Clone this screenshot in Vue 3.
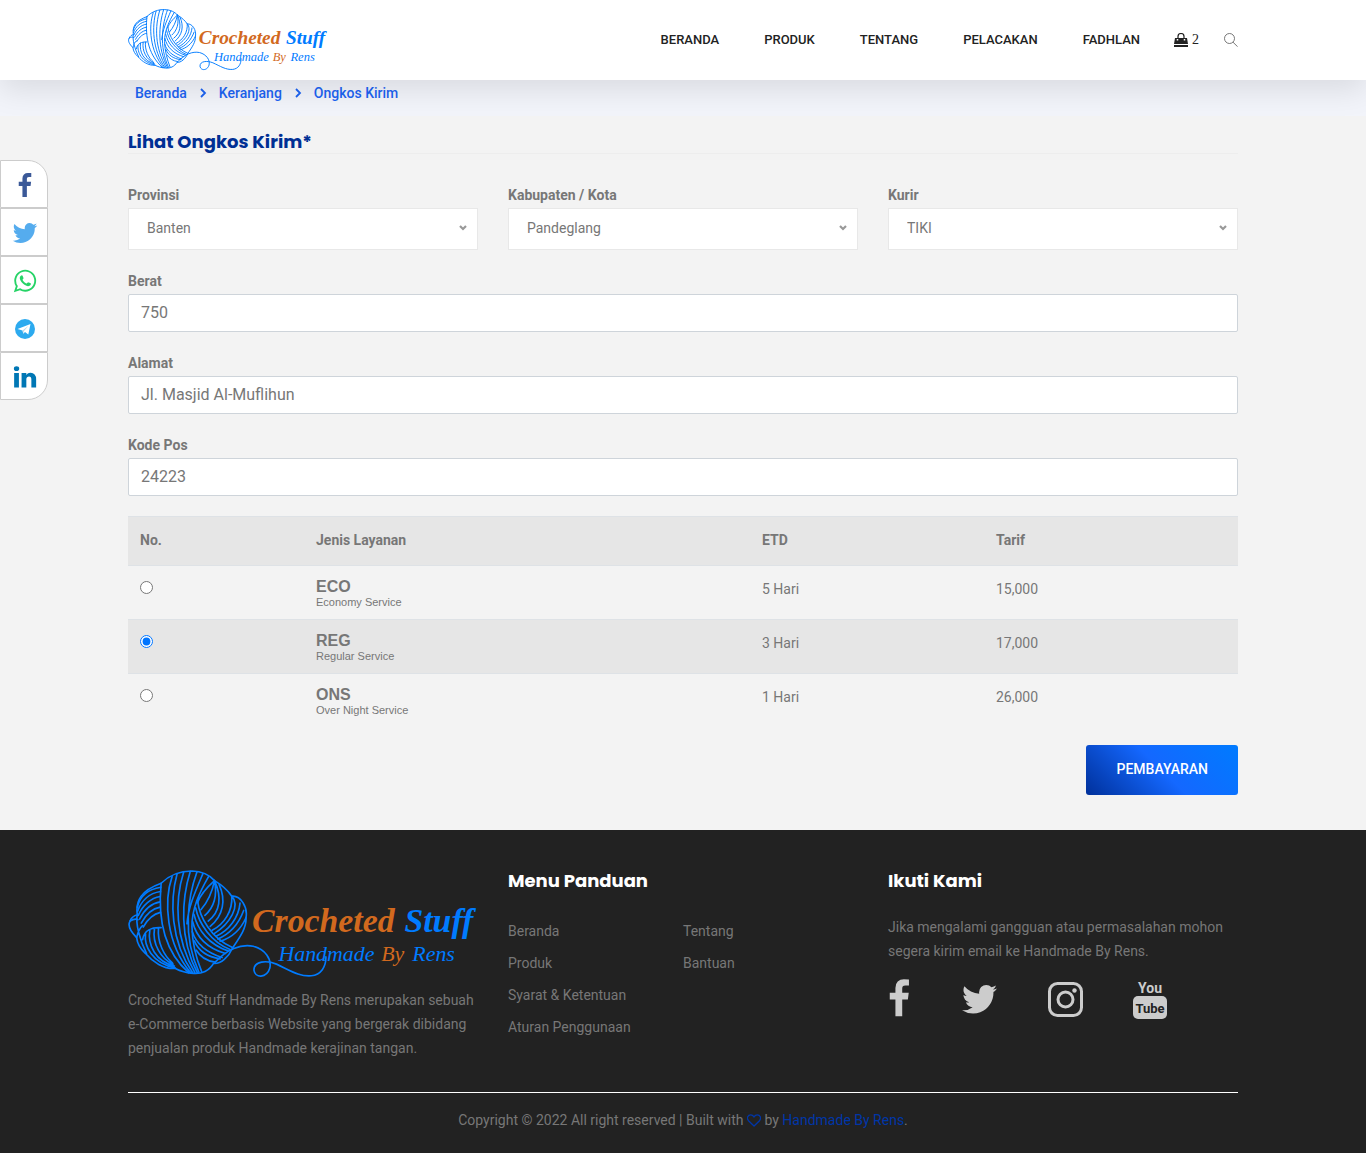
<script setup>
import { h, ref } from 'vue'

const strands = [
  'M122 68C150 40 180 31 215 31C248 32 270 45 283 60C308 75 325 92 335 107C362 104 384 140 378 172C380 202 360 230 337 264C326 290 302 312 280 310C268 332 244 342 220 340C196 338 178 332 165 325C130 328 96 305 75 280C58 265 50 250 48 232C28 212 20 196 28 182C33 170 42 165 50 163C44 120 62 90 122 68Z',
  'M121 80C82 86 58 108 50 140M120 93C86 98 62 122 51 152M119 108C92 112 66 134 53 165M119 124C94 128 72 146 57 176M119 140C96 144 76 162 62 188M120 156C102 160 84 172 68 200',
  'M122 68C114 150 118 262 205 338M155 48C130 120 136 250 211 338M170 40C148 120 150 242 217 338M190 34C163 120 163 232 224 338M210 32C184 115 176 232 231 338M230 34C204 105 184 225 236 336M248 39C224 95 204 140 200 190M265 48C238 95 214 145 215 200C216 250 230 300 244 334M283 60C256 84 240 104 232 126',
  'M232 122C238 170 272 234 337 262M226 142C236 190 272 244 330 268M221 162C232 210 268 254 324 272M217 184C228 230 262 264 316 280M216 214C228 252 258 276 306 292M222 242C234 270 258 290 300 296M228 270C240 290 258 302 285 306',
  'M283 60C292 105 282 140 254 165M283 60C306 110 300 155 264 182M297 72C318 118 310 165 270 198M335 107C338 150 314 190 276 210M335 107C362 135 330 190 282 220M360 128C356 172 326 210 288 228M371 150C354 196 326 222 293 236M378 172C360 212 330 234 300 243M283 60C276 95 262 125 242 148',
  'M66 238C70 210 94 200 122 202M50 163C44 190 58 240 78 280M75 220C70 255 92 308 165 324M88 208C80 255 106 304 162 318M102 204C94 250 122 298 158 312M114 203C110 246 130 286 156 308M48 232C52 215 56 204 66 196M28 182C38 176 46 174 52 178',
  'M285 306C320 268 362 250 400 258C436 268 456 296 450 324C440 356 405 354 402 330C402 302 440 300 470 312C510 330 538 350 575 347C604 344 620 320 619 290'
]

const brandText = (x, y, size, fill, weight, text) =>
  h('text', {
    x,
    y,
    fill,
    'font-size': size,
    'font-weight': weight,
    'font-style': 'italic',
    'font-family': '"Liberation Serif", serif'
  }, text)

const BrandLogo = () =>
  h('svg', { viewBox: '22 28 1056 326', role: 'img', 'aria-label': 'Crocheted Stuff' }, [
    h('g', { fill: 'none', stroke: '#007bff', 'stroke-width': 5, 'stroke-linecap': 'round' },
      strands.map((d) => h('path', { d }))),
    brandText(396, 214, 102, '#d2691e', 700, 'Crocheted'),
    brandText(856, 214, 102, '#007bff', 700, 'Stuff'),
    brandText(476, 304, 66, '#007bff', 400, 'Handmade'),
    brandText(786, 304, 66, '#d2691e', 400, 'By'),
    brandText(880, 304, 66, '#007bff', 400, 'Rens')
  ])

const icons = {
  facebook: 'M1343 12v264h-157q-86 0-116 36t-30 108v189h293l-39 296h-254v759h-306v-759h-255v-296h255v-218q0-186 104-288.500t277-102.500q147 0 228 12z',
  twitter: 'M1684 408q-67 98-162 167 1 14 1 42 0 130-38 259.500t-115.500 248.500-184.500 210.500-258 146-323 54.500q-271 0-496-145 35 4 78 4 225 0 401-138-105-2-188-64.500t-114-159.500q33 5 61 5 43 0 85-11-112-23-185.500-111.500t-73.500-205.500v-4q68 38 146 41-66-44-105-115t-39-154q0-88 44-163 121 149 294.500 238.500t371.500 99.500q-8-38-8-74 0-134 94.500-228.500t228.500-94.500q140 0 236 102 109-21 205-78-37 115-142 178 93-10 186-50z',
  whatsapp: 'M1113 974q13 0 97.500 44t89.500 53q2 5 2 15 0 33-17 76-16 39-71 65.500t-102 26.500q-57 0-190-62-98-45-170-118t-148-185q-72-107-71-194v-8q3-91 74-158 24-22 52-22 6 0 18 1.500t19 1.500q19 0 26.500 6.500t15.500 27.500q8 20 33 88t25 75q0 21-34.500 57.500t-34.500 46.500q0 7 5 15 34 73 102 137 56 53 151 101 12 7 22 7 15 0 54-48.500t52-48.500zm-203 530q127 0 243.500-50t200.500-134 134-200.500 50-243.500-50-243.500-134-200.500-200.500-134-243.500-50-243.500 50-200.500 134-134 200.500-50 243.500q0 203 120 368l-79 233 242-77q158 104 345 104zm0-1382q153 0 292.500 60t240.500 161 161 240.500 60 292.500-60 292.500-161 240.500-240.500 161-292.500 60q-195 0-365-94l-417 134 136-405q-108-178-108-389 0-153 60-292.500t161-240.500 240.500-161 292.500-60z',
  linkedin: 'M477 625v991h-330v-991h330zm21-306q1 73-50.500 122t-135.500 49h-2q-82 0-132-49t-50-122q0-74 51.500-122.500t134.500-48.500 133 48.500 51 122.500zm1166 729v568h-329v-530q0-105-40.500-164.500t-126.500-59.500q-63 0-105.500 34.500t-63.500 85.500q-11 30-11 81v553h-329q2-399 2-647t-1-296l-1-48h329v144h-2q20-32 41-56t56.500-52 87-43.500 114.500-15.500q171 0 275 113.500t104 332.500z'
}

const shares = [
  { name: 'Facebook', path: icons.facebook, color: '#3b5998', box: '15 -64 1792 1792' },
  { name: 'Twitter', path: icons.twitter, color: '#55acee', box: '60 60 1672 1672' },
  { name: 'WhatsApp', path: icons.whatsapp, color: '#25d366', box: '0 0 1792 1792' },
  { name: 'Telegram', path: '', color: '#2caaef', box: '0 0 26 26' },
  { name: 'LinkedIn', path: icons.linkedin, color: '#0077b5', box: '0 0 1792 1792' }
]

const nav = ['Beranda', 'Produk', 'Tentang', 'Pelacakan', 'Fadhlan']
const crumbs = ['Beranda', 'Keranjang', 'Ongkos Kirim']

const selects = [
  { id: 'provinsi', label: 'Provinsi', value: 'Banten' },
  { id: 'kota', label: 'Kabupaten / Kota', value: 'Pandeglang' },
  { id: 'kurir', label: 'Kurir', value: 'TIKI' }
]

const fields = ref([
  { id: 'berat', label: 'Berat', value: '750' },
  { id: 'alamat', label: 'Alamat', value: 'Jl. Masjid Al-Muflihun' },
  { id: 'kodepos', label: 'Kode Pos', value: '24223' }
])

const services = [
  { code: 'ECO', name: 'Economy Service', etd: '5 Hari', price: '15,000' },
  { code: 'REG', name: 'Regular Service', etd: '3 Hari', price: '17,000' },
  { code: 'ONS', name: 'Over Night Service', etd: '1 Hari', price: '26,000' }
]
const chosen = ref('REG')

const guide = [
  ['Beranda', 'Produk', 'Syarat & Ketentuan', 'Aturan Penggunaan'],
  ['Tentang', 'Bantuan']
]
</script>

<template>
  <div class="page">
    <header class="header">
      <div class="container bar">
        <a href="#" class="brand"><BrandLogo class="logo" /></a>
        <nav class="nav">
          <a v-for="item in nav" :key="item" href="#">{{ item }}</a>
        </nav>
        <a href="#" class="cart" aria-label="Keranjang">
          <svg width="14" height="14" viewBox="0 0 14 14">
            <path d="M1 5h12l1 6H0zM0 12h14v2H0z" fill="#222" />
            <path d="M3.500 6v1.500M10.500 6v1.500" stroke="#fff" stroke-width="1.500" />
            <path d="M4 6V3.500a3 3 0 0 1 6 0V6" fill="none" stroke="#222" stroke-width="1.200" />
          </svg>
          <span>2</span>
        </a>
        <button type="button" class="search" aria-label="Cari">
          <svg width="14" height="14" viewBox="0 0 14 14" fill="none" stroke="#555" stroke-width=".8">
            <circle cx="5.500" cy="5.500" r="5" />
            <path d="M9 9.200l4.600 4.500" />
          </svg>
        </button>
      </div>
    </header>

    <div class="crumbs">
      <nav class="container trail" aria-label="Breadcrumb">
        <template v-for="(crumb, i) in crumbs" :key="crumb">
          <svg v-if="i" width="8" height="10" viewBox="0 0 8 10">
            <path d="M2 1l4 4-4 4" fill="none" stroke="#1c63f2" stroke-width="1.800" />
          </svg>
          <a href="#">{{ crumb }}</a>
        </template>
      </nav>
    </div>

    <main class="main">
      <div class="container">
        <h1 class="title">Lihat Ongkos Kirim*</h1>
        <form @submit.prevent>
          <div class="selects">
            <div v-for="s in selects" :key="s.id" class="field">
              <label :for="s.id">{{ s.label }}</label>
              <div class="select">
                <select :id="s.id">
                  <option>{{ s.value }}</option>
                </select>
                <svg width="8" height="6" viewBox="0 0 8 6">
                  <path d="M1 1l3 3 3-3" fill="none" stroke="#999" stroke-width="2.200" />
                </svg>
              </div>
            </div>
          </div>
          <div v-for="f in fields" :key="f.id" class="field">
            <label :for="f.id">{{ f.label }}</label>
            <input :id="f.id" v-model="f.value" type="text" class="input">
          </div>

          <table class="rates">
            <colgroup>
              <col class="c-no">
              <col>
              <col class="c-etd">
              <col class="c-price">
            </colgroup>
            <thead>
              <tr>
                <th>No.</th>
                <th>Jenis Layanan</th>
                <th>ETD</th>
                <th>Tarif</th>
              </tr>
            </thead>
            <tbody>
              <tr v-for="s in services" :key="s.code">
                <td>
                  <input :id="s.code" v-model="chosen" type="radio" name="layanan" :value="s.code">
                </td>
                <td>
                  <label :for="s.code" class="service">
                    <strong>{{ s.code }}</strong>
                    <small>{{ s.name }}</small>
                  </label>
                </td>
                <td>{{ s.etd }}</td>
                <td>{{ s.price }}</td>
              </tr>
            </tbody>
          </table>

          <div class="actions">
            <button type="submit" class="pay">PEMBAYARAN</button>
          </div>
        </form>
      </div>
    </main>

    <footer class="footer">
      <div class="container">
        <div class="columns">
          <section>
            <BrandLogo class="logo-large" />
            <p>Crocheted Stuff Handmade By Rens merupakan sebuah e-Commerce berbasis Website yang bergerak dibidang penjualan produk Handmade kerajinan tangan.</p>
          </section>
          <section>
            <h2>Menu Panduan</h2>
            <div class="guide">
              <ul v-for="(list, i) in guide" :key="i">
                <li v-for="item in list" :key="item"><a href="#">{{ item }}</a></li>
              </ul>
            </div>
          </section>
          <section>
            <h2>Ikuti Kami</h2>
            <p>Jika mengalami gangguan atau permasalahan mohon segera kirim email ke Handmade By Rens.</p>
            <div class="social">
              <a href="#" aria-label="Facebook">
                <svg width="23" height="40" viewBox="400 -15 1035 1800"><path :d="icons.facebook" /></svg>
              </a>
              <a href="#" aria-label="Twitter">
                <svg width="37" height="40" viewBox="63 -14 1665 1800"><path :d="icons.twitter" /></svg>
              </a>
              <a href="#" aria-label="Instagram">
                <svg width="35" height="40" viewBox="0 0 35 40">
                  <rect x="1.500" y="4.500" width="32" height="32" rx="8" class="line" />
                  <circle cx="17.500" cy="20.500" r="7.500" class="line" />
                  <circle cx="26.500" cy="11.500" r="2.200" />
                </svg>
              </a>
              <a href="#" aria-label="YouTube">
                <svg width="34" height="40" viewBox="0 0 34 40" class="youtube">
                  <text x="17" y="14" text-anchor="middle" font-size="14">You</text>
                  <rect y="17" width="34" height="23" rx="5" />
                  <text x="17" y="34" text-anchor="middle" font-size="13" class="dark">Tube</text>
                </svg>
              </a>
            </div>
          </section>
        </div>
        <p class="copyright">
          Copyright © 2022 All right reserved | Built with
          <svg width="14" height="13" viewBox="0 0 14 13">
            <path d="M7 12L1.500 6.700C-.8 4 1 .8 3.700.8 5.400.8 6.400 2 7 2.900 7.600 2 8.600.8 10.300.8 13 .8 14.800 4 12.500 6.700z" fill="none" stroke="#0036a8" stroke-width="1.300" />
          </svg>
          by <a href="#">Handmade By Rens</a>.
        </p>
      </div>
    </footer>

    <aside class="share">
      <a v-for="s in shares" :key="s.name" href="#" :aria-label="s.name">
        <svg width="26" height="26" :viewBox="s.box">
          <path v-if="s.path" :d="s.path" :fill="s.color" />
          <g v-else>
            <circle cx="13" cy="13" r="10" :fill="s.color" />
            <path d="M5.500 13L18.500 8l-2.200 10.500-3.300-2.400-1.700 1.600-.8-3.200z" fill="#fff" />
            <path d="M10.500 14.500l6-4.700-4.700 5.400-.5 2.500z" fill="#b9d8ea" />
          </g>
        </svg>
      </a>
    </aside>
  </div>
</template>

<style>
body {
  margin: 0;
}
</style>

<style scoped>
.page {
  color: #777;
  font: 400 14px/24px Roboto, sans-serif;
}
.page * {
  box-sizing: border-box;
}
a {
  color: inherit;
  text-decoration: none;
}
svg {
  display: block;
}
.container {
  max-width: 1140px;
  margin: 0 auto;
  padding: 0 15px;
}
.header {
  position: relative;
  z-index: 1;
  background: #fff;
  box-shadow: 0 10px 30px rgba(0, 0, 0, 0.1);
}
.bar {
  display: flex;
  align-items: center;
  height: 80px;
}
.logo {
  width: 200px;
}
.nav {
  display: flex;
  gap: 45px;
  margin-left: auto;
  color: #222;
  font-size: 13px;
  font-weight: 500;
  text-transform: uppercase;
}
.cart {
  display: flex;
  align-items: center;
  gap: 4px;
  margin: 0 25px 0 34px;
  color: #222;
  font-family: "Liberation Serif", serif;
}
.search {
  padding: 0;
  border: 0;
  background: none;
}
.crumbs {
  background: #f2f4fa;
}
.trail {
  display: flex;
  align-items: center;
  gap: 12px;
  height: 36px;
  padding: 0 22px 10px;
  color: #1c63f2;
  font-weight: 500;
}
.main {
  position: relative;
  z-index: 2;
  padding: 14px 0 35px;
  background: #f3f3f3;
}
.title {
  margin: 0 0 30px;
  border-bottom: 1px solid #ededed;
  color: #002f94;
  font: 700 18px/23px Poppins, Inter, sans-serif;
}
.selects {
  display: grid;
  grid-template-columns: repeat(3, 1fr);
  gap: 30px;
}
.field {
  margin-bottom: 20px;
}
.field label {
  display: block;
  margin-bottom: 2px;
  font-weight: 700;
  line-height: 22px;
}
.select {
  position: relative;
}
.select select {
  display: block;
  width: 100%;
  height: 42px;
  padding: 0 18px 2px;
  border: 1px solid #e8e8e8;
  border-radius: 0;
  appearance: none;
  background: #fff;
  color: #777;
  font: 14px/38px Roboto, sans-serif;
}
.select svg {
  position: absolute;
  top: 17px;
  right: 11px;
  pointer-events: none;
}
.input {
  display: block;
  width: 100%;
  height: 38px;
  padding: 5px 12px 7px;
  border: 1px solid #ced4da;
  border-radius: 2px;
  background: #fff;
  color: #777;
  font: 16px/24px Roboto, sans-serif;
}
.rates {
  width: 100%;
  border-collapse: collapse;
  table-layout: fixed;
}
.c-no {
  width: 176px;
}
.c-etd {
  width: 234px;
}
.c-price {
  width: 254px;
}
th,
td {
  padding: 11px 12px 13px;
  border-top: 1px solid #dee2e6;
  text-align: left;
  vertical-align: top;
}
td {
  padding-bottom: 10px;
}
thead,
tbody tr:nth-child(even) {
  background: rgba(0, 0, 0, 0.05);
}
td input {
  display: block;
  margin: 4px 0 0;
  accent-color: #0075ff;
}
.service {
  display: block;
  padding-top: 1px;
  font-family: "Liberation Sans", sans-serif;
}
.service strong,
.service small {
  display: block;
  font-size: 16px;
  line-height: 18px;
}
.service small {
  font-size: 11px;
  line-height: 13px;
}
.actions {
  display: flex;
  justify-content: flex-end;
  margin-top: 18px;
}
.pay {
  height: 50px;
  padding: 0 30px 2px;
  border: 0;
  border-radius: 3px;
  background: linear-gradient(45deg, #00309a 0%, #1468ff 50%, #007bff 100%);
  color: #fff;
  font: 500 14px/48px Roboto, sans-serif;
}
.footer {
  padding: 40px 0 21px;
  background: #222;
}
.columns {
  display: grid;
  grid-template-columns: repeat(3, 1fr);
  gap: 30px;
  padding-bottom: 32px;
  border-bottom: 1px solid #fff;
}
.logo-large {
  width: 100%;
  margin-bottom: 10px;
}
.footer p {
  margin: 0;
}
.footer h2 {
  margin: 0 0 23px;
  color: #fff;
  font: 700 18px/22px Poppins, Inter, sans-serif;
}
.guide {
  display: grid;
  grid-template-columns: 1fr 1fr;
  line-height: 32px;
}
.guide ul {
  margin: 0;
  padding: 0;
  list-style: none;
}
.social {
  display: flex;
  gap: 50px;
  margin-top: 16px;
  fill: #ccc;
}
.line {
  fill: none;
  stroke: #ccc;
  stroke-width: 3;
}
.youtube {
  font-family: Roboto, sans-serif;
  font-weight: 700;
}
.dark {
  fill: #222;
}
.footer .copyright {
  padding-top: 15px;
  text-align: center;
}
.copyright svg {
  display: inline-block;
  vertical-align: -2px;
}
.copyright a {
  color: #0036a8;
}
.share {
  position: fixed;
  z-index: 3;
  top: 160px;
  left: 0;
}
.share a {
  display: flex;
  align-items: center;
  justify-content: center;
  width: 48px;
  height: 48px;
  padding: 2px 0 0 2px;
  border: 1px solid #ccc;
  background: #fff;
}
.share a:first-child {
  border-top-right-radius: 20px;
}
.share a:last-child {
  border-bottom-right-radius: 20px;
}
</style>
